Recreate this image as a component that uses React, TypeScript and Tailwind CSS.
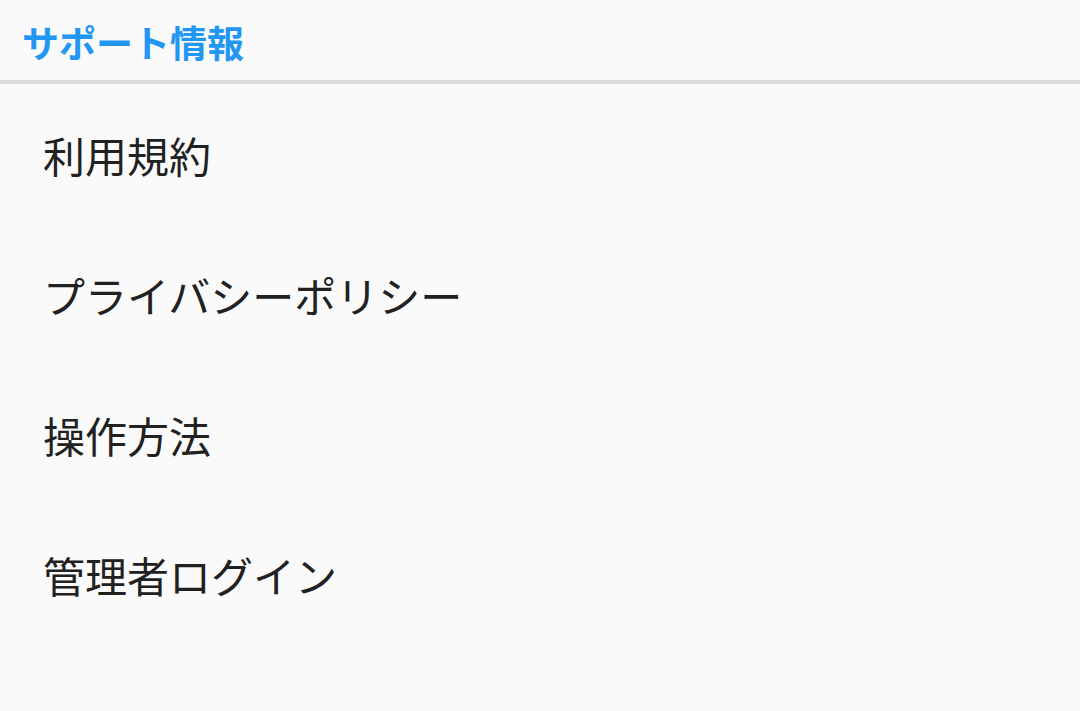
const items = ["利用規約", "プライバシーポリシー", "操作方法", "管理者ログイン"];

export default function App() {
  return (
    <div
      className="min-h-[711px] w-full bg-[#fafafa]"
      style={{ fontFamily: '"Noto Sans CJK JP", "Noto Sans", sans-serif' }}
    >
      {/* Header */}
      <div className="h-[84px] flex items-center px-[22px] pt-[4px] border-b-4 border-[#dcdcdc]">
        <h1 className="text-[37px] font-bold text-[#2196f3] leading-none">サポート情報</h1>
      </div>

      {/* Menu */}
      <ul className="pt-[1px]">
        {items.map((label) => (
          <li
            key={label}
            className="h-[140px] flex items-center px-[43px] text-[42px] text-[#212121] leading-none"
          >
            {label}
          </li>
        ))}
      </ul>
    </div>
  );
}
